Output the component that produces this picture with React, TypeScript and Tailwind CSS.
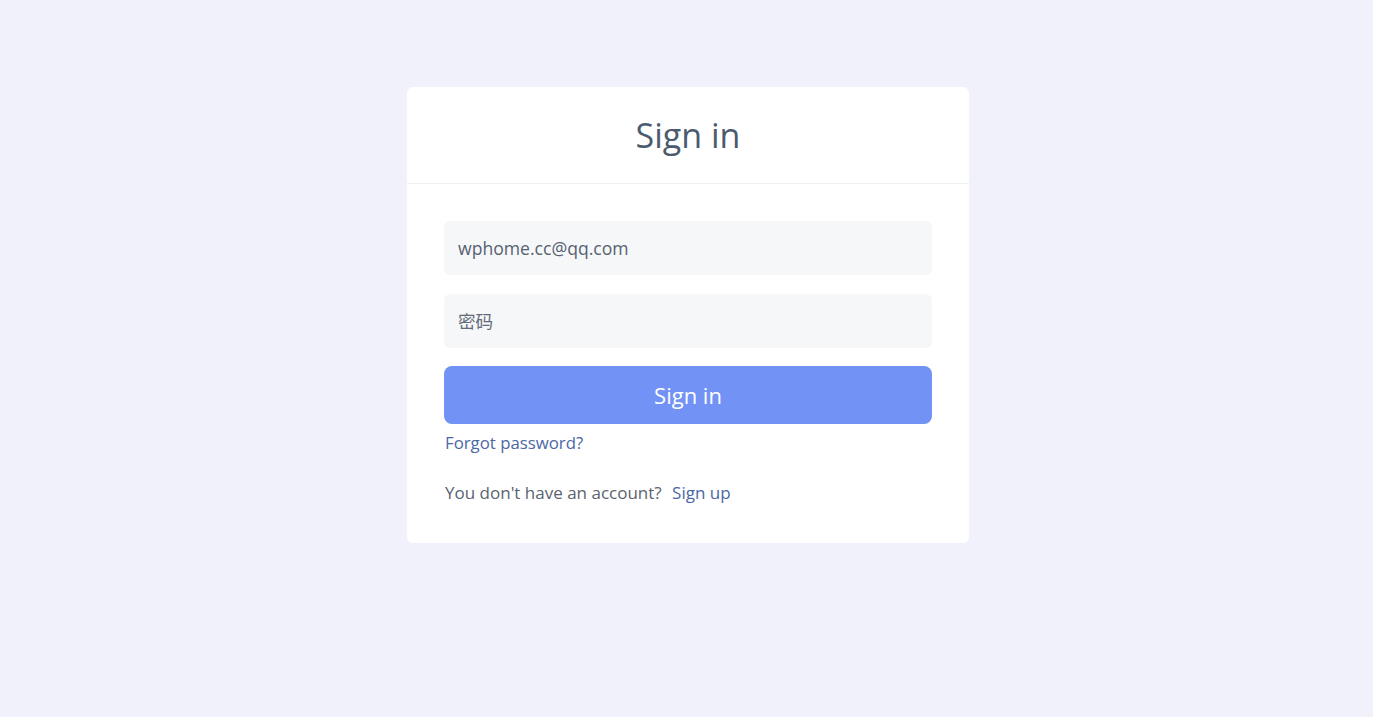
import React from 'react';

export default function App() {
  return (
    <div className="min-h-[717px] bg-[#f0f1fa] pt-[87px] pl-[3px]" style={{ fontFamily: '"Open Sans", "Noto Sans CJK SC", sans-serif' }}>
      <div className="mx-auto w-[562px] rounded-md bg-white">
        {/* Header */}
        <div className="flex h-[97px] items-center justify-center border-b border-[#eef0f4]">
          <h1 className="text-[34px] font-normal text-[#4b5a6e]">Sign in</h1>
        </div>

        {/* Form */}
        <div className="px-[37px] pt-[37px] pb-[37px]">
          <div className="space-y-[19px]">
            <input
              type="text"
              defaultValue="wphome.cc@qq.com"
              className="block h-[54px] w-full rounded-md bg-[#f6f7f9] px-[14px] text-[17.6px] text-[#576170] outline-none"
            />
            <input
              type="text"
              placeholder="密码"
              className="block h-[54px] w-full rounded-md bg-[#f6f7f9] px-[14px] text-[17.6px] text-[#576170] outline-none placeholder:text-[#636b78]"
            />
          </div>
          <button className="mt-[18px] flex h-[58px] w-full items-center justify-center rounded-lg bg-[#7292f5] text-[22px] text-white">
            Sign in
          </button>
          <div className="mt-[6px] pl-px">
            <a href="#" className="text-[16.8px] text-[#4b67a4]">Forgot password?</a>
          </div>
          <p className="mt-[25px] pl-px text-[17px] text-[#5b6370]">
            You don't have an account? <a href="#" className="ml-[6px] text-[#4b67a4]">Sign up</a>
          </p>
        </div>
      </div>
    </div>
  );
}
